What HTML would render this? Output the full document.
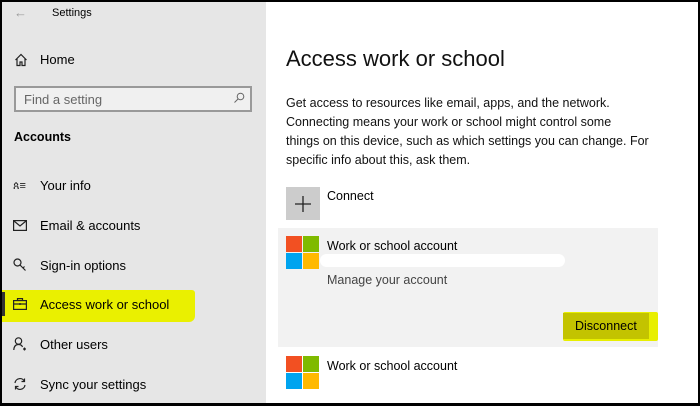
<!DOCTYPE html>
<html><head><style>
*{margin:0;padding:0;box-sizing:border-box}
body{width:700px;height:406px;background:#000;font-family:"Liberation Sans",sans-serif;overflow:hidden;position:relative}
.a{position:absolute}
#side{left:2px;top:2px;width:264px;height:401px;background:#e6e6e6}
#main{left:266px;top:2px;width:432px;height:401px;background:#fff}
.t{position:absolute;white-space:nowrap;color:#000}
.logo{position:absolute;width:34px;height:34px}
.logo i{position:absolute;width:16px;height:16px}
</style></head><body>
<div class="a" id="side"></div>
<div class="a" id="main"></div>
<div class="t" style="left:14px;top:5px;font-size:13px;color:#999">←</div>
<div class="t" style="left:52px;top:7px;font-size:11px">Settings</div>
<svg class="a" style="left:14px;top:53px" width="14" height="14" viewBox="0 0 14 14"><path d="M1.5 7L7 1.5 12.5 7M3 5.5V12.5H6V9H8V12.5H11V5.5" fill="none" stroke="#222" stroke-width="1.2"/></svg>
<div class="t" style="left:40px;top:52px;font-size:13px">Home</div>
<div class="a" style="left:14px;top:86px;width:238px;height:26px;border:2px solid #999;background:#f0f0f0"></div>
<div class="t" style="left:24px;top:92px;font-size:13px;color:#666">Find a setting</div>
<svg class="a" style="left:233px;top:92px" width="12" height="12" viewBox="0 0 12 12"><circle cx="7.5" cy="4.5" r="3.3" fill="none" stroke="#666"/><path d="M5 7L1.5 10.5" stroke="#666"/></svg>
<div class="t" style="left:14px;top:130px;font-size:12.5px;font-weight:bold">Accounts</div>
<div class="t" style="left:13px;top:180px;font-size:11px;color:#222">ጰ≡</div>
<div class="t" style="left:40px;top:178px;font-size:13px">Your info</div>
<svg class="a" style="left:13px;top:220px" width="14" height="11" viewBox="0 0 14 11"><rect x="0.6" y="0.6" width="12.8" height="9.8" fill="none" stroke="#222" stroke-width="1.2"/><path d="M1 1L7 6 13 1" fill="none" stroke="#222" stroke-width="1.2"/></svg>
<div class="t" style="left:40px;top:218px;font-size:13px">Email &amp; accounts</div>
<svg class="a" style="left:13px;top:258px" width="14" height="14" viewBox="0 0 14 14"><circle cx="4.5" cy="4.5" r="3.5" fill="none" stroke="#222" stroke-width="1.2"/><path d="M7 7L12.5 12.5M10 10L11.5 8.5" stroke="#222" stroke-width="1.2"/></svg>
<div class="t" style="left:40px;top:258px;font-size:13px">Sign-in options</div>
<div class="a" style="left:2px;top:290px;width:193px;height:32px;background:#eaf000;border-radius:0 3px 6px 0"></div>
<div class="a" style="left:2px;top:292px;width:3px;height:24px;background:#333"></div>
<svg class="a" style="left:13px;top:298px" width="14" height="12" viewBox="0 0 14 12"><rect x="0.6" y="2.6" width="12.8" height="8.8" fill="none" stroke="#222" stroke-width="1.2"/><path d="M4.5 2.5V0.6H9.5V2.5M0.6 6H13.4M7 5V7" fill="none" stroke="#222" stroke-width="1.2"/></svg>
<div class="t" style="left:40px;top:297px;font-size:13px">Access work or school</div>
<svg class="a" style="left:13px;top:337px" width="14" height="14" viewBox="0 0 14 14"><circle cx="5.5" cy="4" r="3.2" fill="none" stroke="#222" stroke-width="1.2"/><path d="M0.8 13C1 9 3 7.5 5.5 7.5S9 8.5 9.5 10M10 12H13M11.5 10.5V13.5" fill="none" stroke="#222" stroke-width="1.2"/></svg>
<div class="t" style="left:40px;top:337px;font-size:13px">Other users</div>
<svg class="a" style="left:13px;top:377px" width="14" height="14" viewBox="0 0 14 14"><path d="M2 6A5 5 0 0 1 11.5 4.5M12 8A5 5 0 0 1 2.5 9.5M11.5 1.5V4.5H8.5M2.5 12.5V9.5H5.5" fill="none" stroke="#222" stroke-width="1.2"/></svg>
<div class="t" style="left:40px;top:377px;font-size:13px">Sync your settings</div>

<div class="t" style="left:286px;top:46px;font-size:22px;color:#111">Access work or school</div>
<div class="t" style="left:286px;top:94px;font-size:12.5px;line-height:19px;color:#111">Get access to resources like email, apps, and the network.<br>Connecting means your work or school might control some<br>things on this device, such as which settings you can change. For<br>specific info about this, ask them.</div>
<div class="a" style="left:286px;top:187px;width:34px;height:33px;background:#ccc"></div>
<svg class="a" style="left:294px;top:195px" width="18" height="18" viewBox="0 0 18 18"><path d="M9 1V17M1 9H17" stroke="#222" stroke-width="1.3"/></svg>
<div class="t" style="left:327px;top:189px;font-size:12.5px">Connect</div>
<div class="a" style="left:278px;top:228px;width:380px;height:119px;background:#f2f2f2"></div>
<div class="a" style="left:320px;top:254px;width:245px;height:13px;background:#fff;border-radius:7px"></div>
<div class="logo" style="left:286px;top:236px"><i style="left:0;top:0;background:#f25022"></i><i style="left:17px;top:0;background:#7fba00"></i><i style="left:0;top:17px;background:#00a4ef"></i><i style="left:17px;top:17px;background:#ffb900"></i></div>
<div class="t" style="left:327px;top:239px;font-size:12.5px">Work or school account</div>
<div class="t" style="left:327px;top:273px;font-size:12.5px;color:#444">Manage your account</div>
<div class="a" style="left:563px;top:312px;width:95px;height:29px;background:#e8ef00;border-radius:2px"></div>
<div class="a" style="left:563px;top:313px;width:86px;height:26px;background:#c3c300"></div>
<div class="t" style="left:575px;top:319px;font-size:12.5px">Disconnect</div>
<div class="logo" style="left:286px;top:356px"><i style="left:0;top:0;background:#f25022"></i><i style="left:17px;top:0;background:#7fba00"></i><i style="left:0;top:17px;background:#00a4ef"></i><i style="left:17px;top:17px;background:#ffb900"></i></div>
<div class="t" style="left:327px;top:359px;font-size:12.5px">Work or school account</div>
</body></html>
